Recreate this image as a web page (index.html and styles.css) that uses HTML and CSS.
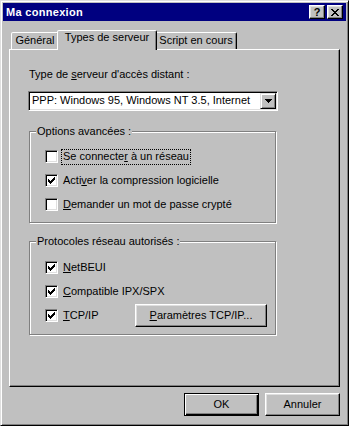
FILE: index.html
```html
<!DOCTYPE html>
<html lang="fr">
<head>
<meta charset="utf-8">
<title>Ma connexion</title>
<link rel="stylesheet" href="styles.css">
</head>
<body>
<div class="window">
  <div class="titlebar">
    <span class="title">Ma connexion</span>
    <div class="caption-buttons">
      <div class="cbtn">?</div>
      <div class="cbtn">
        <svg width="8" height="7" viewBox="0 0 8 7" shape-rendering="crispEdges"><path d="M0 0h2v1h-2zM6 0h2v1h-2zM1 1h2v1h-2zM5 1h2v1h-2zM2 2h4v1h-4zM3 3h2v1h-2zM2 4h4v1h-4zM1 5h2v1h-2zM5 5h2v1h-2zM0 6h2v1h-2zM6 6h2v1h-2z" fill="#000"/></svg>
      </div>
    </div>
  </div>
  <div class="content">
    <div class="tabs">
      <div class="tab tab-general">Général</div>
      <div class="tab tab-active">Types de serveur</div>
      <div class="tab tab-script">Script en cours</div>
    </div>
    <div class="panel">
      <div class="field-label">Type de <u>s</u>erveur d'accès distant :</div>
      <div class="combo">
        <span class="combo-value">PPP: Windows 95, Windows NT 3.5, Internet</span>
        <span class="combo-btn"><svg width="7" height="4" viewBox="0 0 7 4" shape-rendering="crispEdges"><path d="M0 0h7v1h-7zM1 1h5v1h-5zM2 2h3v1h-3zM3 3h1v1h-1z" fill="#000"/></svg></span>
      </div>

      <div class="group group-options">
        <div class="group-title">Options avancées :</div>
        <div class="rows rows-options">
          <div class="row"><span class="check"></span><span class="row-label focus">Se connecte<u>r</u> à un réseau</span></div>
          <div class="row"><span class="check"><svg width="7" height="7" viewBox="0 0 7 7" shape-rendering="crispEdges"><path d="M6 0h1v1h-1zM5 1h2v1h-2zM0 2h1v1h-1zM4 2h3v1h-3zM0 3h2v1h-2zM3 3h3v1h-3zM0 4h5v1h-5zM1 5h3v1h-3zM2 6h1v1h-1z" fill="#000"/></svg></span><span class="row-label">Acti<u>v</u>er la compression logicielle</span></div>
          <div class="row"><span class="check"></span><span class="row-label"><u>D</u>emander un mot de passe crypté</span></div>
        </div>
      </div>

      <div class="group group-protocols">
        <div class="group-title">Protocoles réseau autorisés :</div>
        <div class="rows rows-protocols">
          <div class="row"><span class="check"><svg width="7" height="7" viewBox="0 0 7 7" shape-rendering="crispEdges"><path d="M6 0h1v1h-1zM5 1h2v1h-2zM0 2h1v1h-1zM4 2h3v1h-3zM0 3h2v1h-2zM3 3h3v1h-3zM0 4h5v1h-5zM1 5h3v1h-3zM2 6h1v1h-1z" fill="#000"/></svg></span><span class="row-label"><u>N</u>etBEUI</span></div>
          <div class="row"><span class="check"><svg width="7" height="7" viewBox="0 0 7 7" shape-rendering="crispEdges"><path d="M6 0h1v1h-1zM5 1h2v1h-2zM0 2h1v1h-1zM4 2h3v1h-3zM0 3h2v1h-2zM3 3h3v1h-3zM0 4h5v1h-5zM1 5h3v1h-3zM2 6h1v1h-1z" fill="#000"/></svg></span><span class="row-label"><u>C</u>ompatible IPX/SPX</span></div>
          <div class="row row-btn"><span class="check"><svg width="7" height="7" viewBox="0 0 7 7" shape-rendering="crispEdges"><path d="M6 0h1v1h-1zM5 1h2v1h-2zM0 2h1v1h-1zM4 2h3v1h-3zM0 3h2v1h-2zM3 3h3v1h-3zM0 4h5v1h-5zM1 5h3v1h-3zM2 6h1v1h-1z" fill="#000"/></svg></span><span class="row-label"><u>T</u>CP/IP</span><span class="btn btn-params"><span><u>P</u>aramètres TCP/IP...</span></span></div>
        </div>
      </div>
    </div>
    <div class="footer">
      <span class="btn btn-default btn-footer">OK</span>
      <span class="btn btn-footer">Annuler</span>
    </div>
  </div>
</div>
</body>
</html>
```
FILE: styles.css
```css
body {
  margin: 0;
  background: #c0c0c0;
  font-family: "Liberation Sans", Arial, sans-serif;
  font-size: 11px;
  line-height: 13px;
  color: #000;
}

u { text-underline-offset: 1px; }

.window {
  box-sizing: border-box;
  width: 349px;
  height: 426px;
  border: 1px solid;
  border-color: #dfdfdf #000 #000 #dfdfdf;
  box-shadow: inset 1px 1px #fff, inset -1px -1px #808080;
  padding: 2px;
  display: flex;
  flex-direction: column;
  background: #c0c0c0;
}

.titlebar {
  height: 18px;
  flex: none;
  background: #000080;
  display: flex;
  align-items: center;
  padding: 0 3px 0 3px;
  color: #fff;
  font-weight: bold;
}

.title {
  line-height: 18px;
  letter-spacing: 0.3px;
}

.caption-buttons {
  margin-left: auto;
  display: flex;
  gap: 2px;
}

.cbtn {
  box-sizing: border-box;
  width: 16px;
  height: 14px;
  background: #c0c0c0;
  border: 1px solid;
  border-color: #fff #000 #000 #fff;
  box-shadow: inset -1px -1px #808080, inset 1px 1px #dfdfdf;
  display: flex;
  align-items: center;
  justify-content: center;
  color: #000;
  font-weight: bold;
  font-size: 11px;
  line-height: 12px;
}

.content {
  flex: 1;
  padding: 0 6px;
  display: flex;
  flex-direction: column;
}

.tabs {
  height: 28px;
  flex: none;
  display: flex;
  align-items: flex-end;
  padding-left: 2px;
}

.tab {
  box-sizing: border-box;
  height: 17px;
  padding-top: 1px;
  text-align: center;
  border: 1px solid;
  border-bottom: none;
  border-color: #fff #000 transparent #fff;
  border-radius: 2px 2px 0 0;
  box-shadow: inset -1px 0 #808080;
  background: #c0c0c0;
  white-space: nowrap;
}

.tab-general { width: 48px; }
.tab-script { width: 82px; }

.tab-active {
  width: 100px;
  height: 20px;
  padding-top: 0;
  margin: 0 -2px -1px;
  position: relative;
  z-index: 1;
}

.panel {
  box-sizing: border-box;
  height: 338px;
  flex: none;
  border: 1px solid;
  border-color: #fff #000 #000 #fff;
  box-shadow: inset -1px -1px #808080;
  padding: 18px 0 0 19px;
}

.combo {
  box-sizing: border-box;
  width: 250px;
  height: 20px;
  margin: 10px 0 0 -1px;
  border: 1px solid;
  border-color: #808080 #fff #fff #808080;
  box-shadow: inset 1px 1px #000, inset -1px -1px #dfdfdf;
  background: #fff;
  padding: 1px;
  display: flex;
}

.combo-value {
  flex: 1;
  padding-left: 2px;
  line-height: 15px;
  white-space: nowrap;
}

.combo-btn {
  box-sizing: border-box;
  width: 16px;
  height: 16px;
  background: #c0c0c0;
  border: 1px solid;
  border-color: #dfdfdf #000 #000 #dfdfdf;
  box-shadow: inset 1px 1px #fff, inset -1px -1px #808080;
  display: flex;
  align-items: center;
  justify-content: center;
}

.group {
  box-sizing: border-box;
  width: 247px;
  border: 1px solid #808080;
  box-shadow: inset 1px 1px #fff, 1px 1px #fff;
  display: flex;
  flex-direction: column;
}

.group-options { margin-top: 20px; padding-bottom: 11px; }
.group-protocols { margin-top: 18px; padding-bottom: 7px; }

.group-title {
  margin: -7px 0 0 6px;
  padding: 0 1px;
  background: #c0c0c0;
  align-self: flex-start;
  white-space: nowrap;
}

.rows {
  display: flex;
  flex-direction: column;
  gap: 11px;
  padding-left: 15px;
}

.rows-options { margin-top: 12px; }
.rows-protocols { margin-top: 13px; }

.row {
  display: flex;
  align-items: flex-start;
  height: 13px;
}

.check {
  box-sizing: border-box;
  width: 13px;
  height: 13px;
  flex: none;
  border: 1px solid;
  border-color: #808080 #fff #fff #808080;
  box-shadow: inset 1px 1px #000, inset -1px -1px #dfdfdf;
  background: #fff;
  padding: 2px;
  display: flex;
}

.row-label {
  margin-left: 5px;
  white-space: nowrap;
}

.focus {
  border: 1px dotted #000;
  padding: 0 1px 1px;
  margin: -1px 0 -2px 3px;
}

.row-btn {
  height: 23px;
  align-items: center;
  margin-top: -5px;
}

.btn {
  box-sizing: border-box;
  height: 23px;
  background: #c0c0c0;
  border: 1px solid;
  border-color: #fff #000 #000 #fff;
  box-shadow: inset -1px -1px #808080, inset 1px 1px #dfdfdf;
  display: flex;
  align-items: center;
  justify-content: center;
  white-space: nowrap;
}

.btn-default {
  border-color: #000;
  box-shadow: inset 1px 1px #fff, inset -1px -1px #000, inset -2px -2px #808080;
}

.btn-params {
  margin-left: auto;
  margin-right: 8px;
  width: 132px;
}

.footer {
  display: flex;
  justify-content: flex-end;
  gap: 6px;
  margin-top: 6px;
}

.btn-footer { width: 75px; }
```
